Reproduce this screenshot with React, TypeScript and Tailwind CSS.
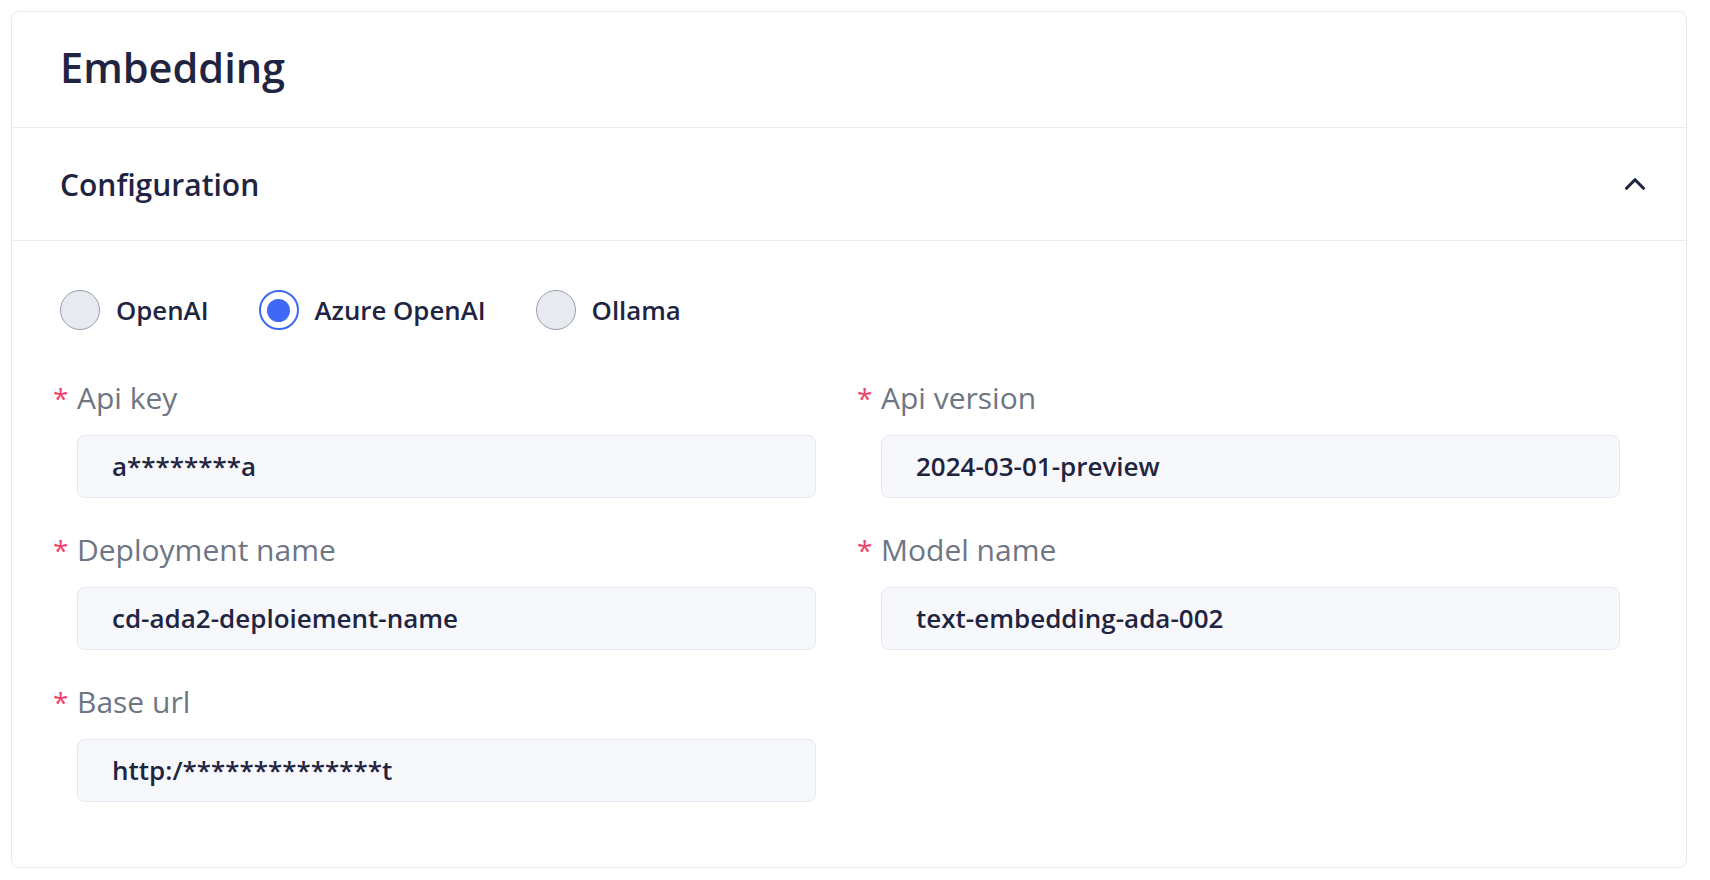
import React, { useState } from 'react';

type Provider = 'openai' | 'azure' | 'ollama';

const providers: { value: Provider; label: string }[] = [
  { value: 'openai', label: 'OpenAI' },
  { value: 'azure', label: 'Azure OpenAI' },
  { value: 'ollama', label: 'Ollama' }
];

const fields = [
  { label: 'Api key', value: 'a********a' },
  { label: 'Api version', value: '2024-03-01-preview' },
  { label: 'Deployment name', value: 'cd-ada2-deploiement-name' },
  { label: 'Model name', value: 'text-embedding-ada-002' },
  { label: 'Base url', value: 'http:/**************t' }
];

const Field = ({ label, value }: { label: string; value: string }) => (
  <div className="flex flex-col">
    <div className="flex items-start h-[40px] leading-[40px]">
      <span className="w-[24px] text-[28px] text-[#f0436a]">*</span>
      <span className="text-[30px] text-[#6e7583]">{label}</span>
    </div>
    <div className="ml-[24px] mt-[17px] w-[739px] h-[63px] flex items-center px-[34px] rounded-[8px] border-[1.5px] border-[#e3e7f0] bg-[#f7f8fc] text-[26px] font-semibold text-[#1f2541]">
      {value}
    </div>
  </div>
);

export default function App() {
  const [provider, setProvider] = useState<Provider>('azure');
  const [open, setOpen] = useState(true);

  return (
    <div className="min-h-screen bg-white" style={{ fontFamily: '"Open Sans", "Noto Sans", sans-serif' }}>
      <div className="ml-[11px] pt-[11px]">
        <div className="w-[1676px] h-[857px] rounded-[8px] border border-[#e5e9f1] bg-white">
          {/* Title */}
          <div className="h-[116px] flex items-center pl-[48px] pb-[4px] border-b border-[#e8ecf3]">
            <h1 className="text-[41.5px] font-semibold text-[#1f2541]">Embedding</h1>
          </div>

          {/* Accordion header */}
          <button
            type="button"
            onClick={() => setOpen(!open)}
            className="w-full h-[113px] flex items-center justify-between pl-[48px] pr-[34px] border-b border-[#e8ecf3]"
          >
            <span className="text-[30px] font-semibold text-[#1f2541]">Configuration</span>
            <svg width="34" height="34" viewBox="0 0 24 24" fill="none" stroke="#1f2541" strokeWidth="2.2" strokeLinecap="round" strokeLinejoin="round">
              <path d="m18 15-6-6-6 6" />
            </svg>
          </button>

          {open && (
            <div className="pt-[49px]">
              {/* Provider radios */}
              <div className="flex items-center pl-[48px] gap-[50px]">
                {providers.map(p => (
                  <label key={p.value} className="flex items-center gap-[16px] cursor-pointer" onClick={() => setProvider(p.value)}>
                    {provider === p.value ? (
                      <span className="w-[40px] h-[40px] rounded-full border-2 border-[#3f68f4] bg-white flex items-center justify-center">
                        <span className="w-[23px] h-[23px] rounded-full bg-[#3f68f4]" />
                      </span>
                    ) : (
                      <span className="w-[40px] h-[40px] rounded-full border-[1.5px] border-[#959fb5] bg-[#e8eaef]" />
                    )}
                    <span className="text-[25.8px] font-semibold text-[#1f2541]">{p.label}</span>
                  </label>
                ))}
              </div>

              {/* Form fields */}
              <div className="mt-[48px] pl-[41px] grid grid-cols-[780px_780px] gap-x-[24px] gap-y-[32px]">
                {fields.map(f => (
                  <Field key={f.label} label={f.label} value={f.value} />
                ))}
              </div>
            </div>
          )}
        </div>
      </div>
    </div>
  );
}
